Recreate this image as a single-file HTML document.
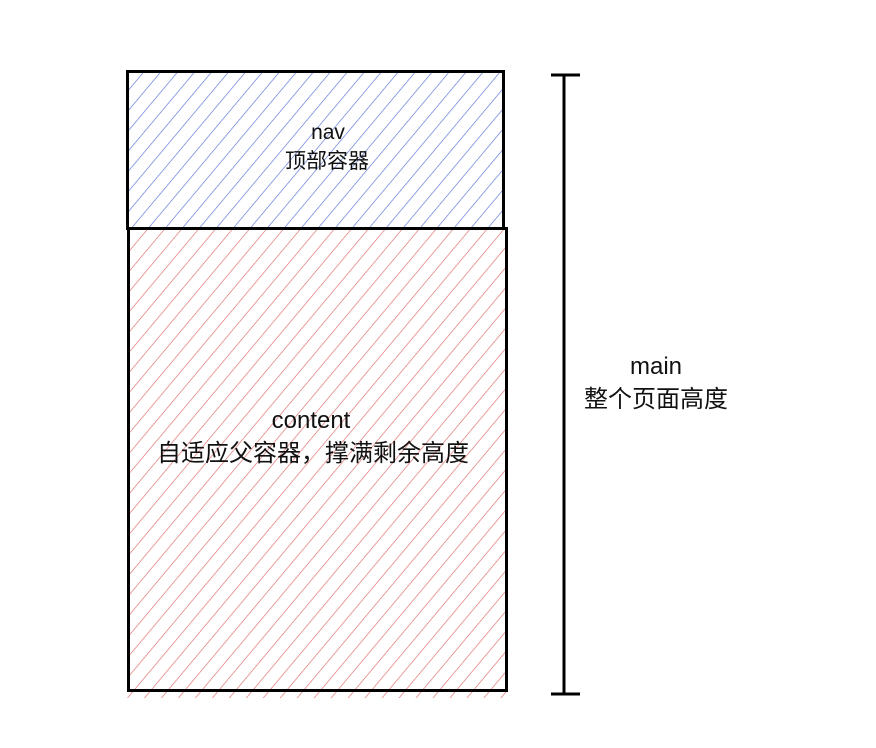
<!DOCTYPE html>
<html><head><meta charset="utf-8"><style>
html,body{margin:0;padding:0;background:#fff;width:876px;height:748px;overflow:hidden}
</style></head><body>
<svg width="876" height="748" xmlns="http://www.w3.org/2000/svg" style="display:block">
<defs>
<pattern id="b" width="13" height="13" patternUnits="userSpaceOnUse" patternTransform="rotate(40)">
<line x1="0" y1="0" x2="0" y2="13" stroke="#5a72d6" stroke-width="1.3"/></pattern>
<pattern id="r" width="13" height="13" patternUnits="userSpaceOnUse" patternTransform="rotate(40)">
<line x1="0" y1="0" x2="0" y2="13" stroke="#e06a6a" stroke-width="1.3"/></pattern>
</defs>
<rect x="127" y="229" width="380" height="469" fill="url(#r)"/>
<rect x="128" y="72" width="375" height="156" fill="url(#b)"/>
<rect x="127.5" y="71.5" width="376" height="157" fill="none" stroke="#000" stroke-width="3"/>
<rect x="128.5" y="228.5" width="378" height="462" fill="none" stroke="#000" stroke-width="3"/>
<line x1="564" y1="75" x2="564" y2="694" stroke="#000" stroke-width="3"/>
<line x1="551" y1="75" x2="580" y2="75" stroke="#000" stroke-width="3"/>
<line x1="551" y1="694" x2="580" y2="694" stroke="#000" stroke-width="3"/>
<g font-family="Liberation Sans, Noto Sans CJK SC, sans-serif" fill="#111" text-anchor="middle">
<text x="328" y="139" font-size="21">nav</text>
<text x="327" y="168" font-size="21">顶部容器</text>
<text x="311" y="428" font-size="24">content</text>
<text x="313" y="461" font-size="24">自适应父容器，撑满剩余高度</text>
<text x="656" y="374" font-size="24">main</text>
<text x="656" y="407" font-size="24">整个页面高度</text>
</g>
</svg>
</body></html>
